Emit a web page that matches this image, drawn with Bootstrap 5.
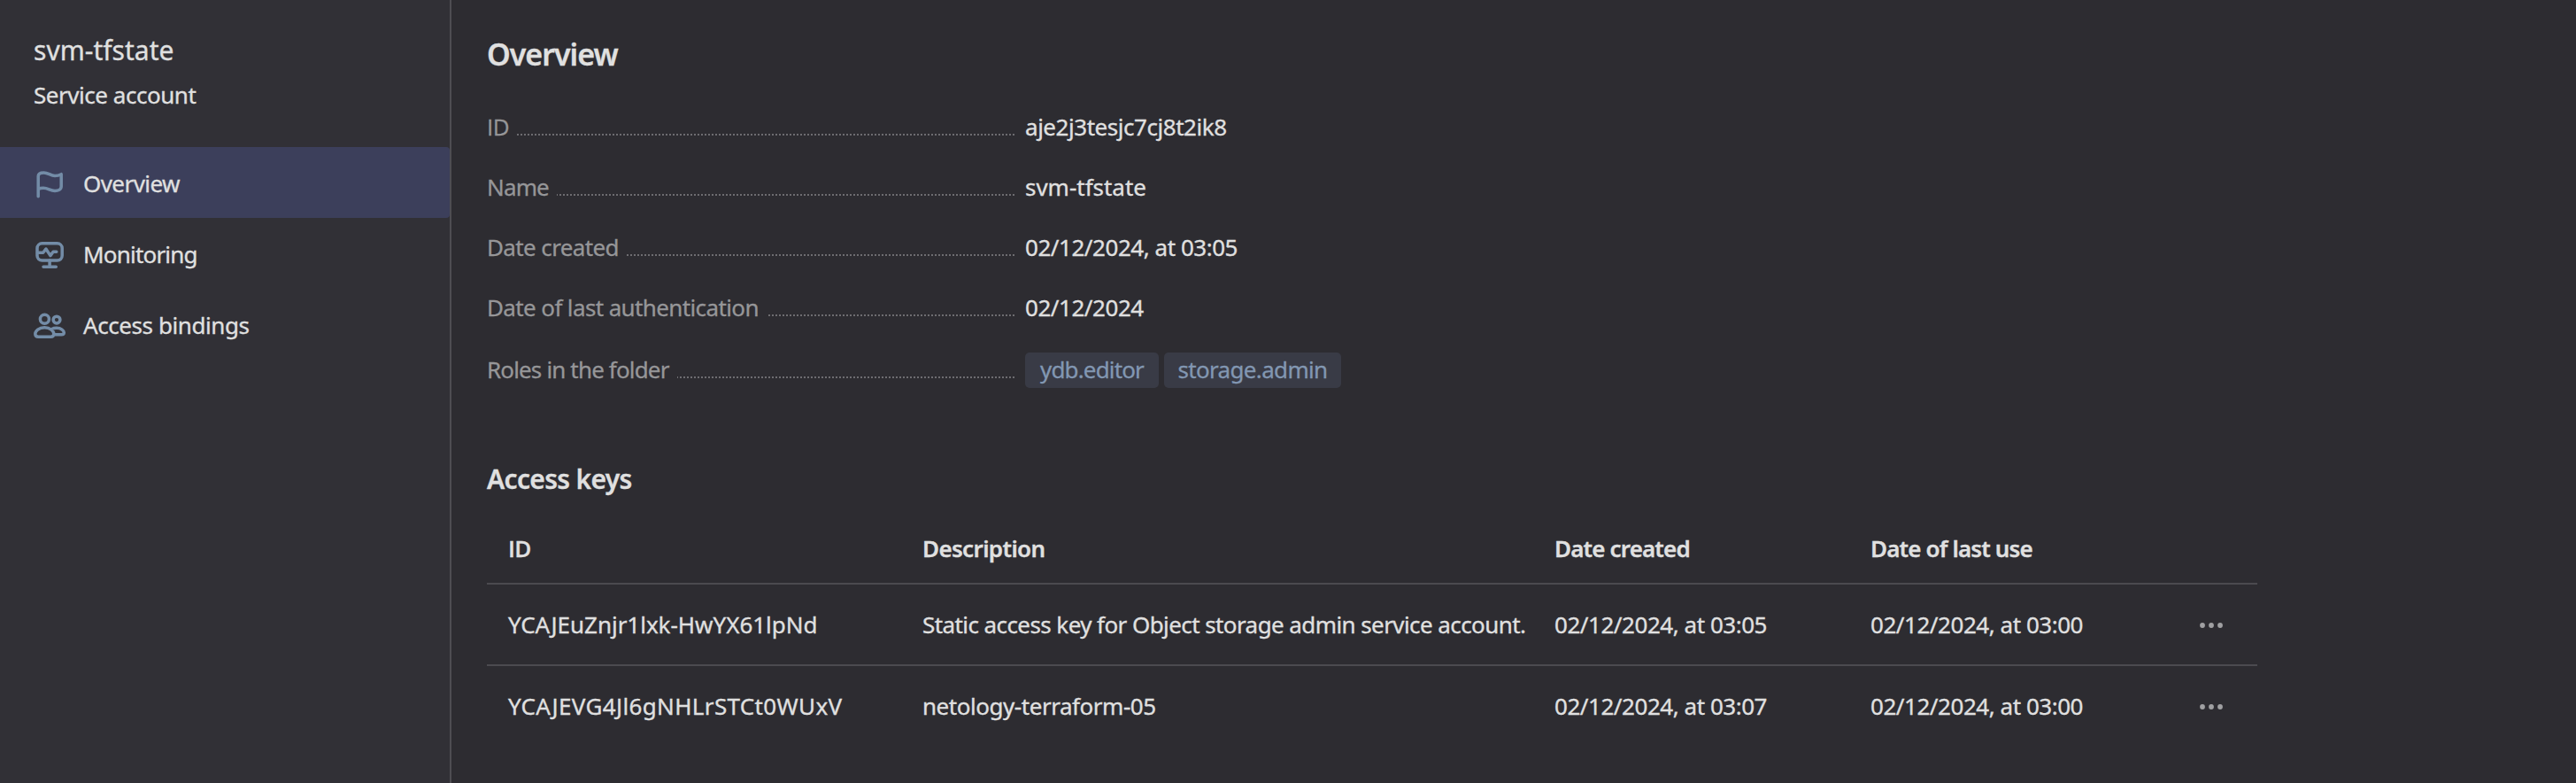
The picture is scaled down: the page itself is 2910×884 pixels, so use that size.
<!DOCTYPE html>
<html lang="en" data-bs-theme="dark">
<head>
<meta charset="utf-8">
<meta name="viewport" content="width=device-width, initial-scale=1">
<title>svm-tfstate</title>
<link href="https://cdn.jsdelivr.net/npm/bootstrap@5.3.0/dist/css/bootstrap.min.css" rel="stylesheet">
<style>
body { background: #2d2c31; color: #e0e0e0; font: 400 26px/36px "Noto Sans", sans-serif; letter-spacing: -.46px; -webkit-text-stroke: .3px; overflow: hidden; }
.side { width: 510px; background: #313036; border-right: 2px solid #4e4d52; padding-top: 39px; }
.side-head { padding-left: 38px; margin-bottom: 41px; }
.side-title { font-size: 30px; line-height: 36px; letter-spacing: .02px; margin-bottom: 14px; }
.side .nav-link { height: 80px; padding: 0 0 0 36px; gap: 18px; color: #e0e0e0; border-radius: 0 4px 4px 0; font-size: 26px; }
.side .nav-link.active { background: #3c3f5b; }
.side .nav-link span { padding-top: 2px; }
.side svg { width: 40px; height: 40px; fill: none; stroke: #738ca7; stroke-width: 3.5; stroke-linecap: round; stroke-linejoin: round; }
main { padding: 37px 0 0 40px; }
h1 { font-size: 34px; line-height: 48px; font-weight: 600; letter-spacing: -1px; margin: 0; color: #e0e0e0; }
h2 { font-size: 30px; line-height: 40px; font-weight: 600; letter-spacing: -.67px; margin: 83px 0 0; color: #e0e0e0; }
.plain { font-family: "Open Sans", sans-serif; }
.props { padding-top: 40px; }
.prop { height: 36px; margin-bottom: 32px; }
.prop.roles { height: 40px; margin-top: 33px; margin-bottom: 0; line-height: 38px; }
.prop.roles .term { padding-bottom: 2px; }
.term { width: 596px; margin: 0 12px 0 0; color: #969698; letter-spacing: -.62px; }
.leader { height: 2px; margin: 18px 0 0 9px; background: repeating-linear-gradient(to left, #6d6c70 0 2px, transparent 2px 4px); }
.role { width: 151px; height: 40px; margin-right: 6px; border-radius: 5px; background: #393b46; color: #8297b2; text-align: center; letter-spacing: -.67px; }
.role + .role { width: 200px; }
.keys { width: 2000px; margin-top: 20px; table-layout: fixed; --bs-table-bg: transparent; --bs-table-color: #e0e0e0; color: #e0e0e0; }
.keys th, .keys td { padding: 0 0 0 24px; height: 92px; border-bottom: 2px solid #4b4a4f; vertical-align: middle; white-space: nowrap; }
.keys th { height: 78px; padding-bottom: 1px; font-weight: 600; letter-spacing: -.65px; }
.keys td:last-child { padding-top: 2px; }
.keys tbody tr:last-child td { border-bottom-color: transparent; }
.keys svg { width: 26px; height: 6px; fill: #a0a0a2; display: block; }
.s-over { letter-spacing: -.57px; } .s-mon { letter-spacing: -.8px; } .s-bind { letter-spacing: -.42px; }
.s-wide { letter-spacing: .35px; } .s-none { letter-spacing: -.02px; } .s-desc { letter-spacing: -.58px; }
.term .s-tight, .role.s-tight, .keys .s-tight { letter-spacing: -.85px; }
</style>
</head>
<body>
<div class="d-flex vh-100">
  <aside class="side flex-shrink-0">
    <div class="side-head">
      <div class="side-title">svm-tfstate</div>
      <div>Service account</div>
    </div>
    <nav class="nav flex-column">
      <a class="nav-link active d-flex align-items-center" href="#">
        <svg viewBox="0 0 40 40"><path d="M7.200 35.800V13c0-2.600 2.400-4 6.300-4 5 0 7.500 3.400 12.500 3.400 3 0 5-.6 7.200-1.700V24.500c0 3.500-3.600 5-7.200 5-5.500 0-7.500-3.200-13-3.200-2.600 0-4.300.4-5.600 1.100"/></svg>
        <span class="s-over">Overview</span>
      </a>
      <a class="nav-link d-flex align-items-center" href="#">
        <svg viewBox="0 0 40 40"><rect x="6" y="8.800" width="28.200" height="19.200" rx="5.500"/><path d="M6.500 19.300h6.200l3.200-4.300 5 7.600 3.200-4.300h3.700M20.100 28v7M13 35.200h14.300"/></svg>
        <span class="s-mon">Monitoring</span>
      </a>
      <a class="nav-link d-flex align-items-center" href="#">
        <svg viewBox="0 0 40 40"><circle cx="14.400" cy="14.200" r="5"/><circle cx="28" cy="15.100" r="3.900"/><path d="M14.300 23.800C8 23.800 3.800 27.500 3.800 31c0 2 1.500 3.200 3.500 3.200h14c2 0 3.500-1.200 3.500-3.200 0-3.500-4.200-7.200-10.500-7.200zM22.500 25.500c1.500-.8 3.500-1.200 5.500-1.200 5 0 8.300 3 8.300 5.200 0 1.500-1.200 2.200-2.700 2.200H25"/></svg>
        <span class="s-bind">Access bindings</span>
      </a>
    </nav>
  </aside>
  <main class="flex-grow-1">
    <h1>Overview</h1>
    <div class="props">
      <div class="prop d-flex"><div class="term d-flex align-items-center"><span class="plain">ID</span><span class="leader flex-grow-1"></span></div><div>aje2j3tesjc7cj8t2ik8</div></div>
      <div class="prop d-flex"><div class="term d-flex align-items-center"><span class="s-tight">Name</span><span class="leader flex-grow-1"></span></div><div class="s-none">svm-tfstate</div></div>
      <div class="prop d-flex"><div class="term d-flex align-items-center"><span>Date created</span><span class="leader flex-grow-1"></span></div><div>02/12/2024, at 03:05</div></div>
      <div class="prop d-flex"><div class="term d-flex align-items-center"><span>Date of last authentication</span><span class="leader flex-grow-1"></span></div><div>02/12/2024</div></div>
      <div class="prop roles d-flex"><div class="term d-flex align-items-center"><span class="s-tight">Roles in the folder</span><span class="leader flex-grow-1"></span></div><div class="role s-tight">ydb.editor</div><div class="role">storage.admin</div></div>
    </div>
    <h2>Access keys</h2>
    <table class="table keys mb-0">
      <colgroup><col width="468"><col width="714"><col width="357"><col width="372"><col></colgroup>
      <thead><tr><th class="plain">ID</th><th>Description</th><th class="s-tight">Date created</th><th class="s-tight">Date of last use</th><th></th></tr></thead>
      <tbody>
        <tr><td class="s-none">YCAJEuZnjr1lxk-HwYX61lpNd</td><td class="s-desc">Static access key for Object storage admin service account.</td><td>02/12/2024, at 03:05</td><td>02/12/2024, at 03:00</td><td><svg viewBox="0 0 26 6"><circle cx="3" cy="3" r="2.900"/><circle cx="13" cy="3" r="2.900"/><circle cx="23" cy="3" r="2.900"/></svg></td></tr>
        <tr><td class="s-wide">YCAJEVG4Jl6gNHLrSTCt0WUxV</td><td>netology-terraform-05</td><td>02/12/2024, at 03:07</td><td>02/12/2024, at 03:00</td><td><svg viewBox="0 0 26 6"><circle cx="3" cy="3" r="2.900"/><circle cx="13" cy="3" r="2.900"/><circle cx="23" cy="3" r="2.900"/></svg></td></tr>
      </tbody>
    </table>
  </main>
</div>
<script src="https://cdn.jsdelivr.net/npm/bootstrap@5.3.0/dist/js/bootstrap.bundle.min.js"></script>
</body>
</html>
